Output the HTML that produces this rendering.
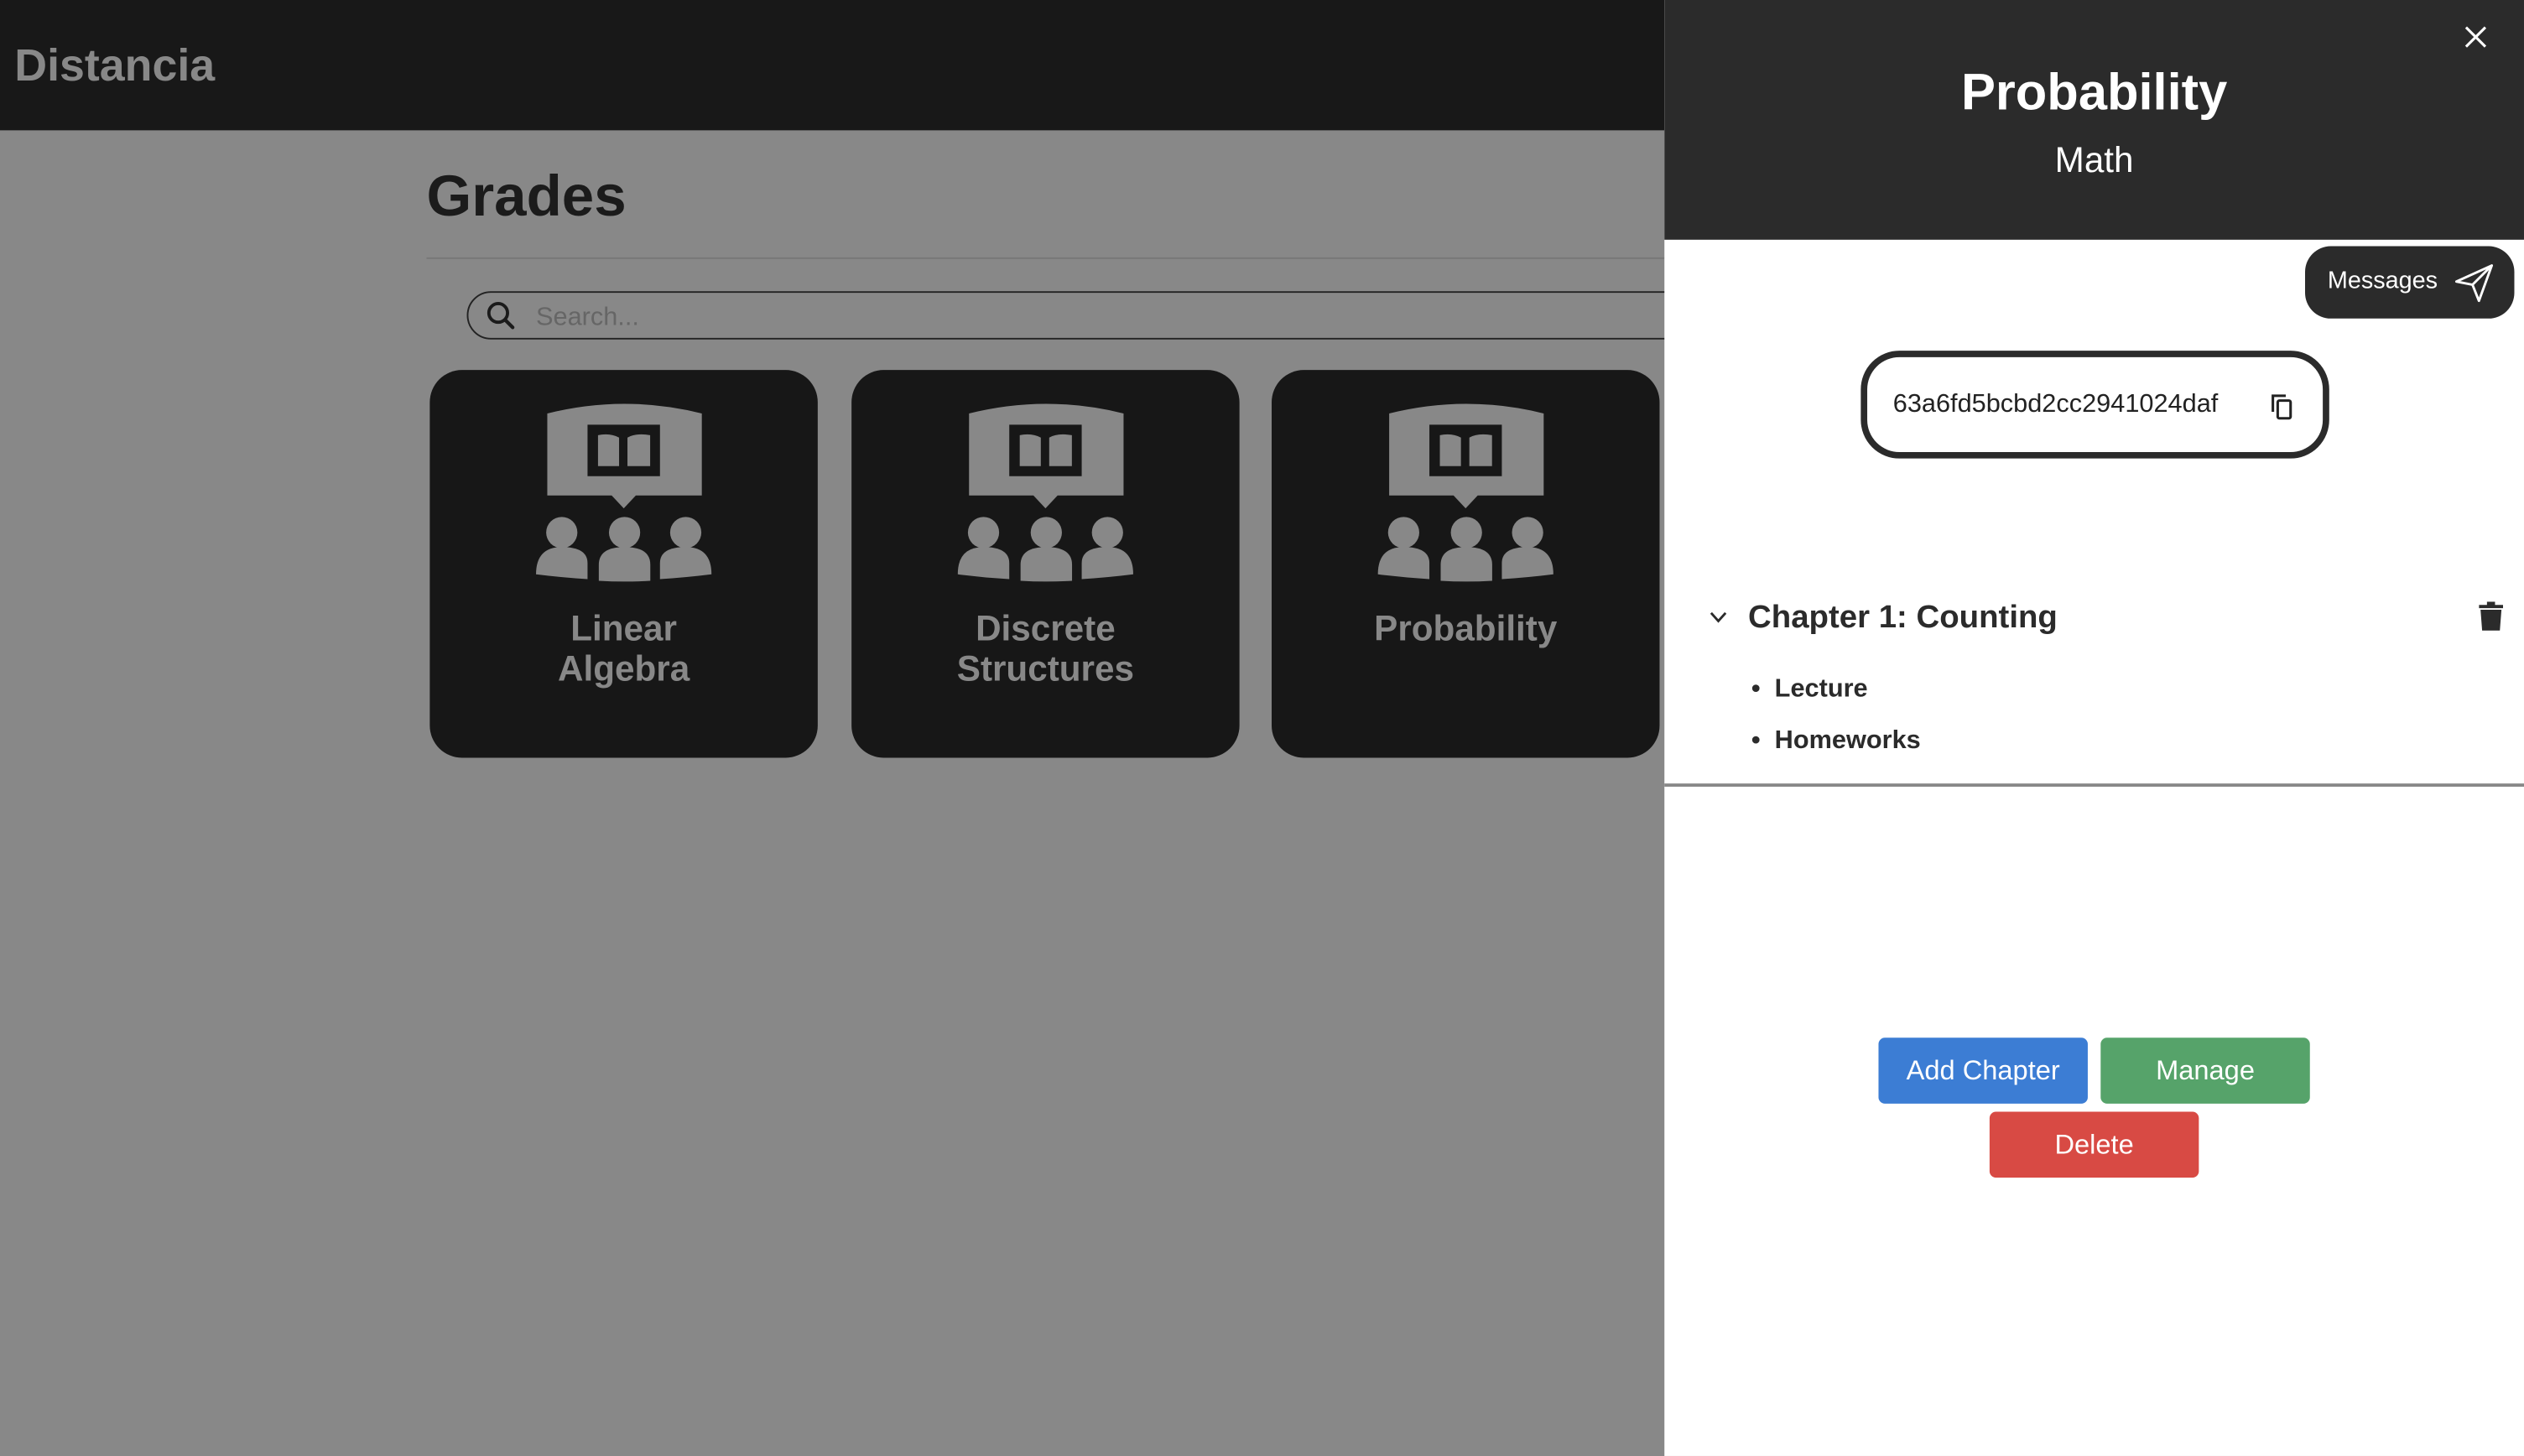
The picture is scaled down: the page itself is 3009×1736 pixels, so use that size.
<!DOCTYPE html>
<html><head><meta charset="utf-8"><style>
html,body{margin:0;padding:0;width:3009px;height:1736px;overflow:hidden;background:#888;}
#w{position:absolute;left:0;top:0;width:1568px;height:905px;transform:scale(1.919,1.9182);transform-origin:0 0;font-family:"Liberation Sans",sans-serif;background:#888;}
.a{position:absolute;}
.card{position:absolute;top:230px;width:241px;height:241px;border-radius:20px;background:#171717;}
.card svg{position:absolute;left:0;top:0;}
.card .t{position:absolute;left:0;right:0;top:148px;text-align:center;color:#888;font-weight:bold;font-size:22px;line-height:25px;}
.btn{position:absolute;height:41px;line-height:41px;color:#fff;text-align:center;font-size:17px;border-radius:4px;width:130px;}
</style></head><body><div id="w">
<div class="a" style="left:0;top:0;width:1034px;height:81px;background:#181818"></div>
<div class="a" style="left:9px;top:25px;font-size:28px;font-weight:bold;color:#888">Distancia</div>
<div class="a" style="left:265px;top:101px;font-size:36px;font-weight:bold;color:#1b1b1b">Grades</div>
<div class="a" style="left:265px;top:160px;width:769px;height:1px;background:#777"></div>
<div class="a" style="left:290px;top:181px;width:760px;height:28px;border:1px solid #222;border-radius:15px"></div>
<svg class="a" style="left:302px;top:187px" width="18" height="18" viewBox="0 0 18 18"><circle cx="7.5" cy="7.5" r="5.8" fill="none" stroke="#1b1b1b" stroke-width="2"/><path d="M12 12l4.5 4.5" stroke="#1b1b1b" stroke-width="2.2" stroke-linecap="round"/></svg>
<div class="a" style="left:333px;top:189px;font-size:16px;color:#666">Search...</div>

<svg width="0" height="0" style="position:absolute"><defs><g id="ic">
<path d="M73 27 Q121 15 169 27 V78 H128 L120.5 86 L113 78 H73 Z" fill="#888"/>
<path d="M98 34 H143 V66 H98 Z M104.5 40.5 V59.7 H117.6 V42 Q112 39 104.5 40.5 Z M122.8 42 V59.7 H136.9 V40.5 Q128 39 122.8 42 Z" fill="#171717" fill-rule="evenodd"/>
<circle cx="82" cy="101" r="9.7" fill="#888"/><circle cx="121" cy="101" r="9.7" fill="#888"/><circle cx="159" cy="101" r="9.7" fill="#888"/>
<path d="M66 127 Q66 110 82 110 Q98 110 98 120 V130 Q82 129 66 127 Z" fill="#888"/>
<path d="M105 121 Q105 110 121 110 Q137 110 137 121 V131 Q121 132 105 131 Z" fill="#888"/>
<path d="M143 120 Q143 110 159 110 Q175 110 175 127 Q159 129 143 130 Z" fill="#888"/>
</g></defs></svg>

<div class="card" style="left:267px"><svg width="241" height="241"><use href="#ic"/></svg><div class="t">Linear<br>Algebra</div></div>
<div class="card" style="left:529px"><svg width="241" height="241"><use href="#ic"/></svg><div class="t">Discrete<br>Structures</div></div>
<div class="card" style="left:790px"><svg width="241" height="241"><use href="#ic"/></svg><div class="t">Probability</div></div>

<div class="a" style="left:1034px;top:0;width:534px;height:905px;background:#fff"></div>
<div class="a" style="left:1034px;top:0;width:534px;height:149px;background:#2b2b2b"></div>
<div class="a" style="left:1034px;top:39px;width:534px;text-align:center;font-size:32px;font-weight:bold;color:#fff">Probability</div>
<div class="a" style="left:1034px;top:87px;width:534px;text-align:center;font-size:22px;color:#fff">Math</div>
<svg class="a" style="left:1531px;top:16px" width="14" height="14"><path d="M1 1L13 13M13 1L1 13" stroke="#fff" stroke-width="1.6"/></svg>

<div class="a" style="left:1432px;top:153px;width:130px;height:45px;border-radius:16px;background:#2b2b2b"></div>
<div class="a" style="left:1446px;top:166px;font-size:15px;color:#fff">Messages</div>
<svg class="a" style="left:1524px;top:163px" width="26" height="26" viewBox="0 0 26 26"><path d="M2 12 L24 2 L16 24 L12 14 Z M12 14 L24 2" fill="none" stroke="#fff" stroke-width="1.5" stroke-linejoin="round"/></svg>

<div class="a" style="left:1156px;top:218px;width:283px;height:59px;border:4px solid #2b2b2b;border-radius:24px"></div>
<div class="a" style="left:1176px;top:243px;font-size:16px;color:#222">63a6fd5bcbd2cc2941024daf</div>
<svg class="a" style="left:1410px;top:244px" width="16" height="18" viewBox="0 0 16 18"><path d="M2 12 V2 H10" fill="none" stroke="#222" stroke-width="1.6"/><rect x="5" y="5" width="8" height="11" rx="1" fill="none" stroke="#222" stroke-width="1.6"/></svg>

<svg class="a" style="left:1062px;top:380px" width="11" height="8"><path d="M1 1L5.5 6L10 1" fill="none" stroke="#2b2b2b" stroke-width="1.5"/></svg>
<div class="a" style="left:1086px;top:373px;font-size:20px;font-weight:bold;color:#2b2b2b">Chapter 1: Counting</div>
<svg class="a" style="left:1540px;top:374px" width="15" height="18" viewBox="0 0 15 18"><path d="M5 0 H10 V2 H15 V4 H0 V2 H5 Z M1 5 H14 L13 18 H2 Z" fill="#2b2b2b"/></svg>
<div class="a" style="left:1088px;top:420px;font-size:16px;font-weight:bold;color:#2b2b2b">•&nbsp; Lecture</div>
<div class="a" style="left:1088px;top:452px;font-size:16px;font-weight:bold;color:#2b2b2b">•&nbsp; Homeworks</div>
<div class="a" style="left:1034px;top:487px;width:534px;height:1.5px;background:#888"></div>

<div class="btn" style="left:1167px;top:645px;background:#3c7dd4">Add Chapter</div>
<div class="btn" style="left:1305px;top:645px;background:#56a36a">Manage</div>
<div class="btn" style="left:1236px;top:691px;background:#d84a44">Delete</div>
</div></body></html>
